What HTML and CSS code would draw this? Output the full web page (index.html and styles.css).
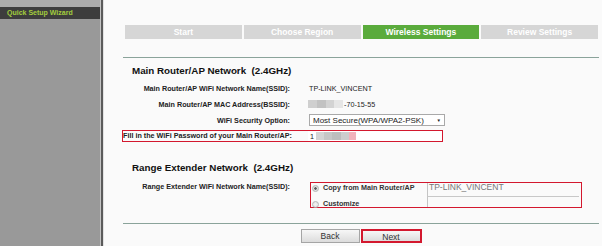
FILE: index.html
```html
<!DOCTYPE html>
<html>
<head>
<meta charset="utf-8">
<link rel="stylesheet" href="styles.css">
</head>
<body>
<div class="app">
  <aside class="sidebar">
    <div class="sb-top"></div>
    <div class="sb-item">Quick Setup Wizard</div>
  </aside>
  <div class="sep"></div>
  <main class="content">
    <div class="steps">
      <div class="step">Start</div>
      <div class="step">Choose Region</div>
      <div class="step active">Wireless Settings</div>
      <div class="step">Review Settings</div>
    </div>
    <div class="rule rule-top"></div>

    <h2 class="sec-title">Main Router/AP Network&nbsp; (2.4GHz)</h2>
    <div class="rows">
      <div class="row">
        <div class="label">Main Router/AP WiFi Network Name(SSID):</div>
        <div class="value">TP-LINK_VINCENT</div>
      </div>
      <div class="row">
        <div class="label">Main Router/AP MAC Address(BSSID):</div>
        <div class="value mac"><span class="blur blur-mac"></span><span class="mac-tail">-70-15-55</span></div>
      </div>
      <div class="row">
        <div class="label">WiFi Security Option:</div>
        <div class="select"><span class="select-text">Most Secure(WPA/WPA2-PSK)</span><span class="select-arrow">&#9660;</span></div>
      </div>
      <div class="row row-hl">
        <div class="label">Fill in the WiFi Password of your Main Router/AP:</div>
        <div class="pw"><span class="pw-1">1</span><span class="blur blur-pw"></span><span class="blur blur-pink"></span></div>
      </div>
    </div>

    <h2 class="sec-title sec-title-2">Range Extender Network&nbsp; (2.4GHz)</h2>
    <div class="ext-row">
      <div class="label ext-label">Range Extender WiFi Network Name(SSID):</div>
      <div class="ext-box">
        <div class="ext-line ext-line-1">
          <span class="radio checked"></span>
          <span class="ext-opt">Copy from Main Router/AP</span>
          <span class="ext-input ext-input-1">TP-LINK_VINCENT</span>
        </div>
        <div class="ext-line ext-line-2">
          <span class="radio"></span>
          <span class="ext-opt">Customize</span>
          <span class="ext-input ext-input-2"></span>
        </div>
      </div>
    </div>
    <div class="rule rule-bottom"></div>

    <div class="buttons">
      <button class="btn">Back</button>
      <button class="btn btn-next">Next</button>
    </div>
  </main>
</div>
</body>
</html>
```

FILE: styles.css
```css
html, body {
  margin: 0;
  padding: 0;
  height: 246px;
  overflow: hidden;
}
body {
  font-family: "Liberation Sans", Arial, sans-serif;
  background: #fafafa;
}
.app {
  display: flex;
  height: 246px;
}
.sidebar {
  width: 100px;
  flex: none;
  background: #999999;
}
.sb-top {
  height: 7px;
  background: #ababab;
}
.sb-item {
  height: 12px;
  background: #3d3d3d;
  color: #a3cd3d;
  font-weight: bold;
  font-size: 7px;
  line-height: 12px;
  padding-left: 7px;
  white-space: nowrap;
}
.sep {
  width: 2px;
  flex: none;
  background: #5b5b5b;
  border-left: 1px solid #c4c4c4;
  border-right: 1px solid #e2e2e2;
}
.content {
  flex: 1;
  padding: 25px 3px 0 19px;
  background: #fafafa;
  min-width: 0;
}
.steps {
  display: grid;
  grid-template-columns: repeat(4, 1fr);
  gap: 2px;
  margin: 0 1px 0 2px;
  height: 14px;
}
.step {
  background: #d6d6d6;
  color: #ffffff;
  font-weight: bold;
  font-size: 8.5px;
  line-height: 14px;
  text-align: center;
  white-space: nowrap;
}
.step.active {
  background: #5aab3c;
}
.rule {
  height: 1px;
  background: #8aa39a;
}
.rule-top {
  margin-top: 18px;
}
.sec-title {
  margin: 7px 0 0 9px;
  font-size: 9.8px;
  line-height: 12px;
  font-weight: bold;
  color: #111111;
  white-space: nowrap;
}
.sec-title-2 {
  margin-top: 21px;
}
.rows {
  margin-top: 3px;
}
.row {
  display: flex;
  align-items: center;
  height: 16px;
}
.label {
  width: 167px;
  flex: none;
  margin-right: 19px;
  text-align: right;
  font-size: 7.2px;
  font-weight: bold;
  color: #222222;
  white-space: nowrap;
}
.value {
  font-size: 7.2px;
  color: #1a1a1a;
  white-space: nowrap;
}
.mac {
  display: flex;
  align-items: center;
}
.blur {
  display: inline-block;
  filter: blur(0.6px);
}
.blur-mac {
  width: 35px;
  height: 8px;
  margin-left: -1px;
  background: linear-gradient(90deg, #cfcfcf 0, #cfcfcf 9px, #c2c2c2 9px, #c2c2c2 18px, #d3d3d3 18px, #d3d3d3 26px, #e6e6e6 26px);
}
.mac-tail {
  margin-left: 1px;
}
.select {
  height: 10px;
  border: 1px solid #a9a9a9;
  background: #ffffff;
  display: flex;
  align-items: center;
  justify-content: space-between;
  padding: 0 3px 0 3px;
  box-sizing: content-box;
  width: 128px;
}
.select-text {
  font-size: 8px;
  color: #1a1a1a;
  white-space: nowrap;
}
.select-arrow {
  font-size: 4.5px;
  color: #222222;
}
.row-hl {
  height: 10px;
  margin: 3px 0;
  width: 319px;
  outline: 1.6px solid #d3182e;
  align-items: stretch;
}
.row-hl .label {
  line-height: 10px;
}
.pw {
  flex: 1;
  margin-left: -1px;
  background: #ffffff;
  display: flex;
  align-items: center;
  font-size: 7.2px;
  color: #222222;
  padding-left: 2px;
}
.pw-1 {
  margin-right: 2px;
}
.blur-pw {
  width: 33px;
  height: 8px;
  background: linear-gradient(90deg, #d4d4d4 0, #d4d4d4 8px, #c6c6c6 8px, #c6c6c6 16px, #bdbdbd 16px, #bdbdbd 25px, #cdcdcd 25px);
}
.blur-pink {
  width: 7px;
  height: 8px;
  background: #f1b3bc;
}
.ext-row {
  display: flex;
  align-items: flex-start;
  margin-top: 8px;
}
.ext-label {
  line-height: 9px;
}
.ext-box {
  width: 270px;
  height: 24px;
  border: 1.6px solid #d3182e;
  margin-left: 1px;
  display: flex;
  flex-direction: column;
}
.ext-line {
  display: flex;
  align-items: flex-start;
}
.ext-line-1 {
  height: 14px;
}
.ext-line-2 {
  flex: 1;
}
.radio {
  width: 5px;
  height: 5px;
  flex: none;
  border-radius: 50%;
  border: 0.6px solid #b5b5b5;
  background: radial-gradient(circle, #f4f4f4 0, #dedede 100%);
  margin: 2px 4px 0 1px;
}
.radio.checked {
  background: radial-gradient(circle, #555 0, #666 1px, #e6e6e6 1.6px, #d0d0d0 100%);
}
.ext-line-2 .radio {
  margin-top: 4px;
}
.ext-opt {
  width: 104px;
  flex: none;
  font-size: 7.2px;
  font-weight: bold;
  color: #333333;
  line-height: 9px;
  white-space: nowrap;
}
.ext-line-2 .ext-opt {
  margin-top: 2px;
}
.ext-input {
  flex: 1;
  margin-right: 2px;
  border-left: 1px solid #c4c4c4;
  font-size: 8.5px;
  color: #777777;
  white-space: nowrap;
  padding-left: 1px;
}
.ext-input-1 {
  height: 13px;
  line-height: 9px;
  border-bottom: 1px solid #c8c8c8;
}
.ext-input-2 {
  height: 10px;
}
.rule-bottom {
  margin-top: 15px;
}
.buttons {
  display: flex;
  justify-content: center;
  gap: 1px;
  margin-top: 5px;
}
.btn {
  width: 59px;
  height: 14px;
  padding: 0;
  border: 1px solid #a5a5a5;
  background: linear-gradient(#f7f7f7, #dcdcdc);
  font-family: "Liberation Sans", Arial, sans-serif;
  font-size: 8.5px;
  color: #333333;
  line-height: 12px;
}
.btn-next {
  width: 61px;
  border: 2px solid #d3182e;
}
```
